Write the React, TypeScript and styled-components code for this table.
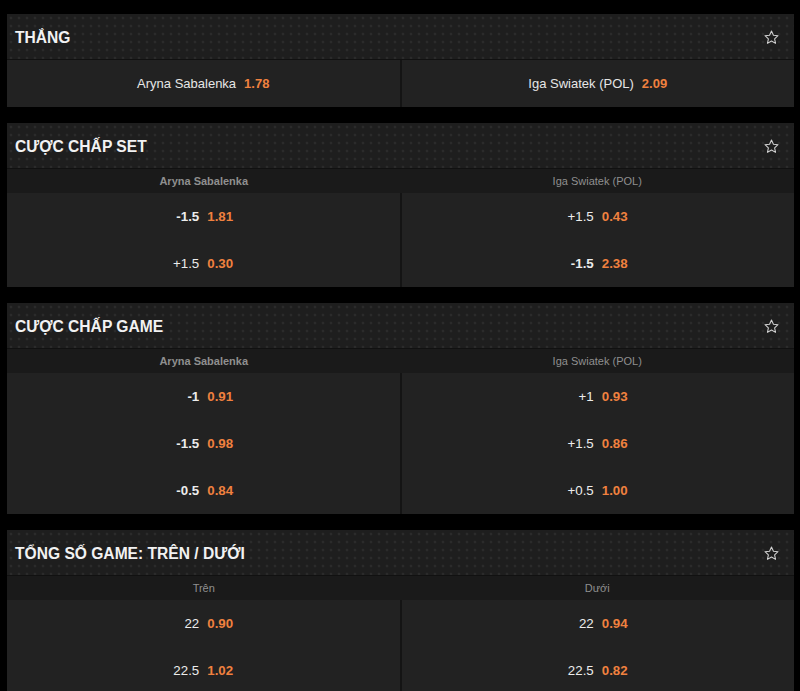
import React from "react";
import styled, { createGlobalStyle } from "styled-components";

const GlobalStyle = createGlobalStyle`
  html, body { margin: 0; padding: 0; background: #000; }
  body { font-family: "Liberation Sans", Arial, sans-serif; }
`;

const Page = styled.div`
  display: flex;
  flex-direction: column;
  gap: 16px;
  padding: 14px 6px 0 7px;
  background: #000;
  min-height: 691px;
  box-sizing: border-box;
`;

const Panel = styled.section`
  display: flex;
  flex-direction: column;
  background: #131313;
`;

const Header = styled.div`
  height: 46px;
  display: flex;
  align-items: center;
  justify-content: space-between;
  padding: 2px 14px 0 8px;
  background-color: #1e1e1e;
  background-image: radial-gradient(circle, rgba(255, 255, 255, 0.06) 1px, transparent 1.7px);
  background-size: 8px 8px;
  border-bottom: 1px solid #111;
  box-sizing: border-box;
`;

const Title = styled.h2`
  margin: 0;
  font-size: 15.6px;
  font-weight: 700;
  color: #f2f2f2;
`;

const StarButton = styled.span`
  display: flex;
  width: 17px;
  height: 17px;
  color: #d0d0d0;
`;

const SubHeader = styled.div`
  display: grid;
  grid-template-columns: 1fr 1fr;
  height: 24px;
  background: #1a1a1a;
`;

const SubCell = styled.div<{ $bold?: boolean }>`
  display: flex;
  align-items: center;
  justify-content: center;
  font-size: 11px;
  color: #8f8f8f;
  font-weight: ${(p) => (p.$bold ? 700 : 400)};
`;

const Columns = styled.div`
  display: grid;
  grid-template-columns: 1fr 1fr;
  gap: 2px;
  background: #141414;
`;

const Column = styled.div`
  display: flex;
  flex-direction: column;
  background: #222222;
`;

const Row = styled.div`
  height: 47px;
  display: grid;
  grid-template-columns: 1fr 1fr;
  align-items: center;
  column-gap: 8px;
  font-size: 13.3px;
`;

const Handicap = styled.span<{ $bold?: boolean }>`
  justify-self: end;
  color: #ececec;
  font-weight: ${(p) => (p.$bold ? 700 : 400)};
`;

const Odds = styled.span`
  justify-self: start;
  color: #f0813f;
  font-weight: 700;
`;

const WinRow = styled.div`
  height: 47px;
  display: flex;
  align-items: center;
  justify-content: center;
  gap: 8px;
  font-size: 13px;
  background: #222222;
`;

const Name = styled.span`
  color: #e6e6e6;
`;

const Star = () => (
  <StarButton>
    <svg width="17" height="17" viewBox="0 0 24 24" fill="none" stroke="currentColor" strokeWidth="1.5" strokeLinejoin="round">
      <path d="M12 2.8l2.75 5.9 6.45.75-4.8 4.4 1.3 6.4L12 17.05 6.3 20.25l1.3-6.4-4.8-4.4 6.45-.75z" />
    </svg>
  </StarButton>
);

type Line = { h: string; o: string };

const Market = ({
  title,
  left,
  right,
  leftBold,
  rightBold,
  leftRows,
  rightRows,
}: {
  title: string;
  left: string;
  right: string;
  leftBold?: boolean;
  rightBold?: boolean;
  leftRows: Line[];
  rightRows: Line[];
}) => (
  <Panel>
    <Header>
      <Title>{title}</Title>
      <Star />
    </Header>
    <SubHeader>
      <SubCell $bold={leftBold}>{left}</SubCell>
      <SubCell $bold={rightBold}>{right}</SubCell>
    </SubHeader>
    <Columns>
      {[leftRows, rightRows].map((rows, ci) => (
        <Column key={ci}>
          {rows.map((r, i) => (
            <Row key={i}>
              <Handicap $bold={r.h.startsWith("-")}>{r.h}</Handicap>
              <Odds>{r.o}</Odds>
            </Row>
          ))}
        </Column>
      ))}
    </Columns>
  </Panel>
);

export default function App() {
  return (
    <>
      <GlobalStyle />
      <Page>
        <Panel>
          <Header>
            <Title>THẮNG</Title>
            <Star />
          </Header>
          <Columns>
            <WinRow>
              <Name>Aryna Sabalenka</Name>
              <Odds>1.78</Odds>
            </WinRow>
            <WinRow>
              <Name>Iga Swiatek (POL)</Name>
              <Odds>2.09</Odds>
            </WinRow>
          </Columns>
        </Panel>

        <Market
          title="CƯỢC CHẤP SET"
          left="Aryna Sabalenka"
          right="Iga Swiatek (POL)"
          leftBold
          leftRows={[
            { h: "-1.5", o: "1.81" },
            { h: "+1.5", o: "0.30" },
          ]}
          rightRows={[
            { h: "+1.5", o: "0.43" },
            { h: "-1.5", o: "2.38" },
          ]}
        />

        <Market
          title="CƯỢC CHẤP GAME"
          left="Aryna Sabalenka"
          right="Iga Swiatek (POL)"
          leftBold
          leftRows={[
            { h: "-1", o: "0.91" },
            { h: "-1.5", o: "0.98" },
            { h: "-0.5", o: "0.84" },
          ]}
          rightRows={[
            { h: "+1", o: "0.93" },
            { h: "+1.5", o: "0.86" },
            { h: "+0.5", o: "1.00" },
          ]}
        />

        <Market
          title="TỔNG SỐ GAME: TRÊN / DƯỚI"
          left="Trên"
          right="Dưới"
          leftRows={[
            { h: "22", o: "0.90" },
            { h: "22.5", o: "1.02" },
          ]}
          rightRows={[
            { h: "22", o: "0.94" },
            { h: "22.5", o: "0.82" },
          ]}
        />
      </Page>
    </>
  );
}
